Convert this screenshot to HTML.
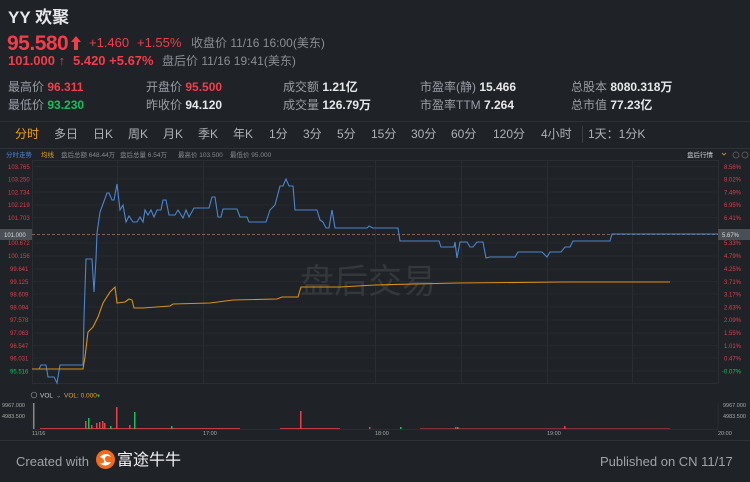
<!DOCTYPE html>
<html><head><meta charset="utf-8"><style>
*{margin:0;padding:0;box-sizing:border-box}
html,body{width:750px;height:482px;overflow:hidden}
body{background:#1f2226;color:#c9ccd1;font-family:"Liberation Sans","Noto Sans CJK SC",sans-serif;position:relative}
.a{position:absolute;white-space:nowrap;line-height:1.2}
.r{color:#f23d4a}.g{color:#16c15c}.gr{color:#8a8e95}.w{color:#e6e8eb;font-weight:bold}
.l{color:#9a9ea5;font-size:12px}
.v{font-size:12px;font-weight:bold}
.tab{position:absolute;top:127px;font-size:12px;color:#aeb2b8;line-height:1.2}
</style></head><body>
<div class="a" style="left:8px;top:8px;font-size:17px;font-weight:bold;color:#e6e8eb">YY 欢聚</div>
<div class="a r" style="left:7px;top:31px;font-size:21px;font-weight:bold;letter-spacing:-0.5px">95.580</div>
<svg class="a" style="left:70px;top:35px" width="12" height="16"><path d="M6 1L11 7H8V15H4V7H1Z" fill="#f23d4a"/></svg>
<div class="a r" style="left:89px;top:35px;font-size:13px">+1.460</div>
<div class="a r" style="left:137px;top:35px;font-size:13px">+1.55%</div>
<div class="a gr" style="left:191px;top:36px;font-size:12px">收盘价 11/16 16:00(美东)</div>
<div class="a r" style="left:8px;top:53px;font-size:13px;font-weight:bold">101.000 ↑</div>
<div class="a r" style="left:73px;top:53px;font-size:13px;font-weight:bold">5.420 +5.67%</div>
<div class="a gr" style="left:162px;top:54px;font-size:12px">盘后价 11/16 19:41(美东)</div>

<div class="a l" style="left:8px;top:80px">最高价 <span class="v r">96.311</span></div>
<div class="a l" style="left:8px;top:98px">最低价 <span class="v g">93.230</span></div>
<div class="a l" style="left:146px;top:80px">开盘价 <span class="v r">95.500</span></div>
<div class="a l" style="left:146px;top:98px">昨收价 <span class="v w">94.120</span></div>
<div class="a l" style="left:283px;top:80px">成交额 <span class="v w">1.21亿</span></div>
<div class="a l" style="left:283px;top:98px">成交量 <span class="v w">126.79万</span></div>
<div class="a l" style="left:420px;top:80px">市盈率(静) <span class="v w">15.466</span></div>
<div class="a l" style="left:420px;top:98px">市盈率TTM <span class="v w">7.264</span></div>
<div class="a l" style="left:571px;top:80px">总股本 <span class="v w">8080.318万</span></div>
<div class="a l" style="left:571px;top:98px">总市值 <span class="v w">77.23亿</span></div>

<div class="a" style="left:0;top:121px;width:750px;height:1px;background:#2e3237"></div>
<div class="a" style="left:0;top:148px;width:750px;height:1px;background:#2e3237"></div>
<div class="tab" style="left:15px;color:#f0a020">分时</div>
<div class="tab" style="left:54px">多日</div>
<div class="tab" style="left:93px">日K</div>
<div class="tab" style="left:128px">周K</div>
<div class="tab" style="left:163px">月K</div>
<div class="tab" style="left:198px">季K</div>
<div class="tab" style="left:233px">年K</div>
<div class="tab" style="left:269px">1分</div>
<div class="tab" style="left:303px">3分</div>
<div class="tab" style="left:337px">5分</div>
<div class="tab" style="left:371px">15分</div>
<div class="tab" style="left:411px">30分</div>
<div class="tab" style="left:451px">60分</div>
<div class="tab" style="left:493px">120分</div>
<div class="tab" style="left:541px">4小时</div>
<div class="a" style="left:582px;top:126px;width:1px;height:17px;background:#3a3e44"></div>
<div class="tab" style="left:588px">1天：1分K</div>

<svg class="a" style="left:0;top:148px" width="750" height="292" font-family="Liberation Sans,Noto Sans CJK SC,sans-serif">
<g transform="translate(0,-148)">
<g font-size="6.5">
<text x="6" y="157" fill="#4a86d0">分时走势</text><text x="41" y="157" fill="#e8a020">均线</text>
<text x="61" y="157" fill="#888c93">盘后总额 648.44万</text><text x="120" y="157" fill="#888c93">盘后总量 6.54万</text>
<text x="178" y="157" fill="#888c93">最高价 103.500</text><text x="230" y="157" fill="#888c93">最低价 95.000</text>
<text x="687" y="157" fill="#d0d3d7">盘后行情</text>
</g>
<path d="M722 153l2 2 2-2" stroke="#e8a020" fill="none" stroke-width="0.8"/>
<circle cx="736" cy="155" r="3" stroke="#555" fill="none"/><circle cx="745" cy="155" r="3" stroke="#555" fill="none"/>
<g stroke="#2a2e33" stroke-width="1">
<path d="M32 160.5H718M32 383.5H718"/>
<path d="M32.5 160V383M117.5 160V383M203.5 160V383M375.5 160V383M461.5 160V383M547.5 160V383M632.5 160V383M718.5 160V383"/>
</g>
<g stroke="#262a2f" stroke-width="1">
<path d="M32 166.5H718M32 179H718M32 192H718M32 205H718M32 217.5H718M32 243H718M32 256H718M32 269H718M32 281.5H718M32 294H718M32 307H718M32 320H718M32 333H718M32 345.5H718M32 358H718M32 371H718"/>
</g>
<text x="300" y="293" font-size="34" fill="#34383d">盘后交易</text>
<line x1="32" y1="234.5" x2="718" y2="234.5" stroke="#9a7a6a" stroke-dasharray="3,2" stroke-width="0.8"/>
<rect x="0" y="229" width="32" height="11" fill="#4a4e55"/>
<rect x="718" y="229" width="32" height="11" fill="#4a4e55"/>
<g font-size="6" fill="#d8414b">
<text x="8" y="169">103.765</text><text x="8" y="181.5">103.250</text><text x="8" y="194.5">102.734</text><text x="8" y="207">102.219</text><text x="8" y="220">101.703</text><text x="8" y="245">100.672</text><text x="8" y="258">100.156</text><text x="10" y="271">99.641</text><text x="10" y="284">99.125</text><text x="10" y="296.5">98.609</text><text x="10" y="309.5">98.094</text><text x="10" y="322">97.578</text><text x="10" y="335">97.063</text><text x="10" y="348">96.547</text><text x="10" y="360.5">96.031</text>
<text x="724" y="169">8.56%</text><text x="724" y="181.5">8.02%</text><text x="724" y="194.5">7.49%</text><text x="724" y="207">6.95%</text><text x="724" y="220">6.41%</text><text x="724" y="245">5.33%</text><text x="724" y="258">4.79%</text><text x="724" y="271">4.25%</text><text x="724" y="284">3.71%</text><text x="724" y="296.5">3.17%</text><text x="724" y="309.5">2.63%</text><text x="724" y="322">2.09%</text><text x="724" y="335">1.55%</text><text x="724" y="348">1.01%</text><text x="724" y="360.5">0.47%</text>
</g>
<text x="10" y="373.5" font-size="6" fill="#16c15c">95.516</text><text x="722" y="373.5" font-size="6" fill="#16c15c">-0.07%</text>
<text x="4" y="237" font-size="6" fill="#ddd">101.000</text><text x="722" y="237" font-size="6" fill="#ddd">5.67%</text>
<polyline fill="none" stroke="#4a86d0" stroke-width="1.1" points="32,369 39,369 41,365 46,365 48,377 54,377 57,383 60,365 83,365 84,318 86,259 92,259 94,292 96,259 97,233 100,212 107,193 109,193 112,200 114,200 117,184 120,210 123,205 126,222 129,216 133,222 137,222 140,217 143,222 145,210 148,215 151,210 154,217 157,210 161,210 163,200 166,200 169,215 175,215 178,210 183,218 186,210 189,217 194,208 209,208 212,197 215,197 218,217 221,217 223,209 237,209 240,217 247,217 249,222 266,222 270,210 275,205 280,186 283,186 286,179 289,186 293,186 295,210 317,210 320,220 323,222 326,228 329,228 332,210 335,228 367,228 369,226 373,228 398,228 400,241 439,241 441,247 454,247 455,242 457,258 460,242 467,242 470,247 473,247 477,242 483,242 486,258 490,257 515,257 518,252 542,252 547,257 550,252 561,252 565,247 570,247 573,241 610,241 612,234 718,234"/>
<polyline fill="none" stroke="#d8901a" stroke-width="1.1" points="32,369 83,369 85,357 88,332 93,327 98,317 103,303 110,292 115,287 117,303 125,302 129,299 132,300 134,308 143,308 170,306 173,304 210,303 233,300 277,299 282,297 298,297 301,287 340,287 375,285 457,283 563,282 605,282 670,282"/>
<g font-size="6.5">
<circle cx="34" cy="395" r="2.8" stroke="#888" fill="none" stroke-width="0.7"/>
<text x="40" y="397.5" fill="#ccc">VOL</text><text x="56" y="397.5" fill="#888">⌄</text>
<text x="64" y="397.5" fill="#e8a020">VOL: 0.000</text><text x="96" y="397.5" fill="#16c15c" font-size="5">▼</text>
</g>
<g font-size="5.5" fill="#aaa">
<text x="2" y="407">9967.000</text><text x="2" y="418">4983.500</text>
<text x="723" y="407">9967.000</text><text x="723" y="418">4983.500</text>
<text x="32" y="435">11/16</text><text x="203" y="435">17:00</text><text x="375" y="435">18:00</text><text x="547" y="435">19:00</text><text x="718" y="435">20:00</text>
</g>
<line x1="32" y1="403" x2="32" y2="429" stroke="#2a2e33"/><line x1="718" y1="403" x2="718" y2="429" stroke="#2a2e33"/>
<line x1="32" y1="429.5" x2="718" y2="429.5" stroke="#2a2e33"/>
<rect x="33" y="403" width="1.5" height="26" fill="#888"/>
<g fill="#e8414b">
<rect x="85" y="421" width="1.5" height="8"/><rect x="91" y="425" width="1.5" height="4"/><rect x="96" y="423" width="1.5" height="6"/><rect x="99" y="422" width="1.5" height="7"/><rect x="102" y="421" width="1.5" height="8"/><rect x="104" y="423" width="1.5" height="6"/><rect x="116" y="407" width="1.5" height="22"/><rect x="129" y="425" width="1.5" height="4"/><rect x="300" y="411" width="1.5" height="18"/><rect x="369" y="427" width="1.5" height="2"/><rect x="455" y="427" width="1.5" height="2"/><rect x="564" y="426" width="1.5" height="3"/>
<rect x="40" y="428" width="200" height="0.8"/><rect x="280" y="428" width="60" height="0.8"/><rect x="420" y="428" width="250" height="0.8" opacity=".6"/>
</g>
<g fill="#16c15c">
<rect x="88" y="418" width="1.5" height="11"/><rect x="134" y="412" width="1.5" height="17"/><rect x="110" y="426" width="1.5" height="3"/><rect x="171" y="426" width="1.5" height="3"/><rect x="400" y="427" width="1.5" height="2"/><rect x="457" y="427" width="1.5" height="2"/>
</g>
</g>
</svg>
<div class="a" style="left:0;top:440px;width:750px;height:1px;background:#2e3237"></div>
<div class="a" style="left:16px;top:454px;font-size:13px;color:#9ea3aa">Created with</div>
<svg class="a" style="left:96px;top:450px" width="19" height="19"><circle cx="9.5" cy="9.5" r="9.5" fill="#f26b1d"/><path d="M4 7C7 3 13 3 15 7C12 5 9 6 9 9C9 12 12 13 15 12C13 16 7 17 4 13C6 14 8 13 8 11C8 9 6 8 4 7Z" fill="#fff"/></svg>
<div class="a" style="left:117px;top:451px;font-size:16px;color:#f2f3f5">富途牛牛</div>
<div class="a" style="left:600px;top:454px;font-size:13px;color:#9ea3aa">Published on CN 11/17</div>
</body></html>
